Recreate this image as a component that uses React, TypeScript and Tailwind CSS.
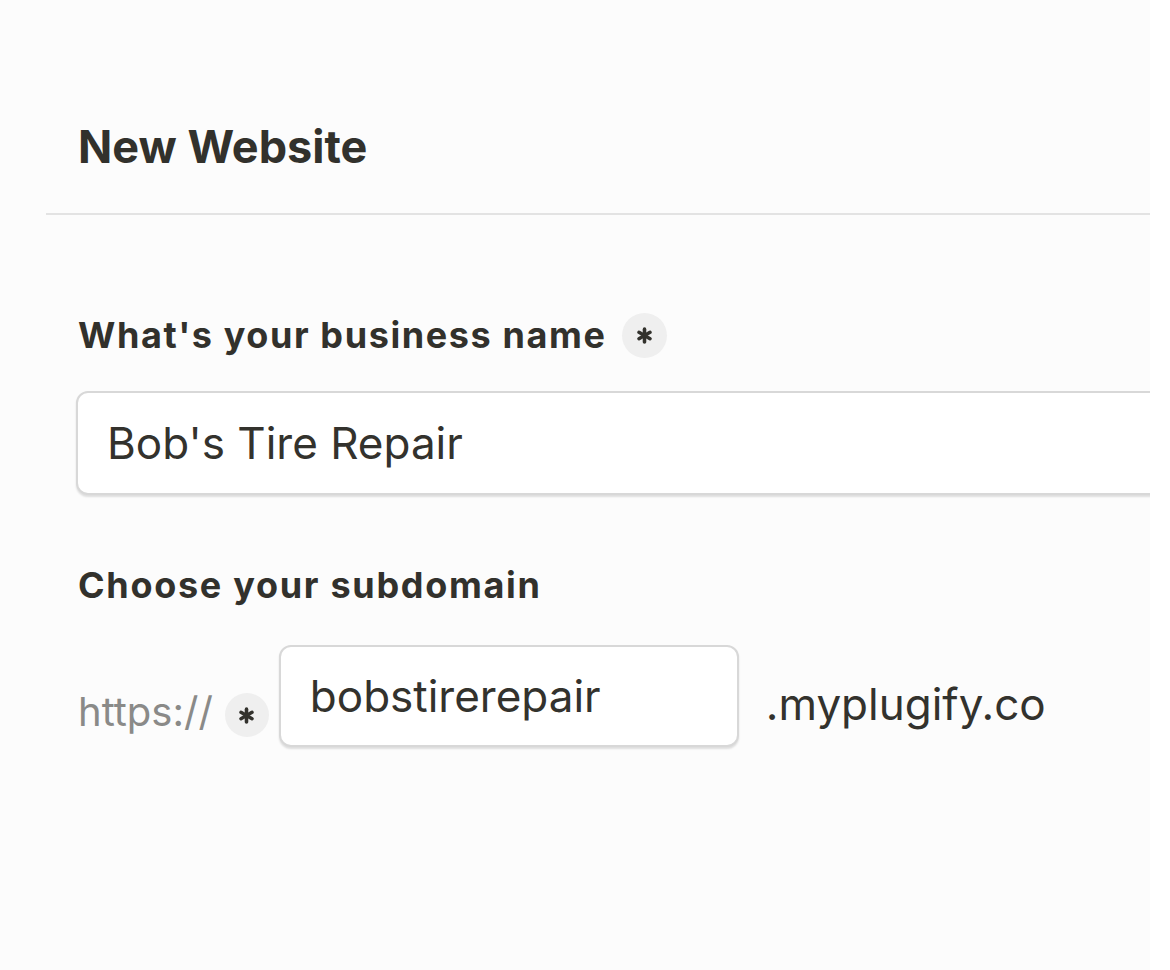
import React from "react";

const RequiredBadge = ({ className = "" }: { className?: string }) => (
  <span
    className={`flex h-[45px] w-[45px] shrink-0 items-center justify-center rounded-full bg-[#efefef] ${className}`}
  >
    <svg viewBox="0 0 20 20" className="h-[17px] w-[17px] text-[#33322d]">
      <g stroke="currentColor" strokeWidth="4.2" strokeLinecap="round">
        <line x1="10" y1="2.5" x2="10" y2="17.5" />
        <line x1="3.5" y1="6.25" x2="16.5" y2="13.75" />
        <line x1="3.5" y1="13.75" x2="16.5" y2="6.25" />
      </g>
    </svg>
  </span>
);

const App = () => {
  return (
    <div className="min-h-screen bg-white font-['Inter',sans-serif]">
      <main className="h-[970px] w-[1150px] overflow-hidden bg-[#fcfcfc] pl-[46px]">
        <header className="border-b-2 border-[#e3e3e3] pb-[39px] pl-[32px] pt-[120px]">
          <h1 className="text-[45px] font-bold leading-[54px] text-[#32312c]">
            New Website
          </h1>
        </header>

        <section className="flex flex-col pl-[32px] pt-[98px]">
          <div className="flex items-center gap-[15px]">
            <label className="text-[36px] font-bold leading-[41px] tracking-[1.6px] text-[#32312c]">
              What's your business name
            </label>
            <RequiredBadge />
          </div>

          <div className="-ml-[2px] mt-[33px] flex h-[104px] w-[1200px] items-center rounded-[12px] border-2 border-[#d8d8d8] bg-white pl-[29px] shadow-[0_2px_2px_rgba(0,0,0,0.12)]">
            <span className="text-[44px] leading-none text-[#33322d]">
              Bob's Tire Repair
            </span>
          </div>

          <label className="mt-[70px] text-[36px] font-bold leading-[41px] tracking-[1.7px] text-[#32312c]">
            Choose your subdomain
          </label>

          <div className="mt-[39px] flex items-center">
            <span className="mt-[32px] text-[40px] leading-none text-[#8a8a88]">
              https://
            </span>
            <RequiredBadge className="ml-[12px] mt-[38px] !h-[44px] !w-[44px]" />
            <div className="ml-[10px] flex h-[102px] w-[460px] items-center rounded-[12px] border-2 border-[#d8d8d8] bg-white pl-[29px] shadow-[0_2px_2px_rgba(0,0,0,0.12)]">
              <span className="text-[44px] leading-none text-[#33322d]">
                bobstirerepair
              </span>
            </div>
            <span className="ml-[27px] mt-[16px] text-[44px] leading-none text-[#33322d]">
              .myplugify.co
            </span>
          </div>
        </section>
      </main>
    </div>
  );
};

export default App;
